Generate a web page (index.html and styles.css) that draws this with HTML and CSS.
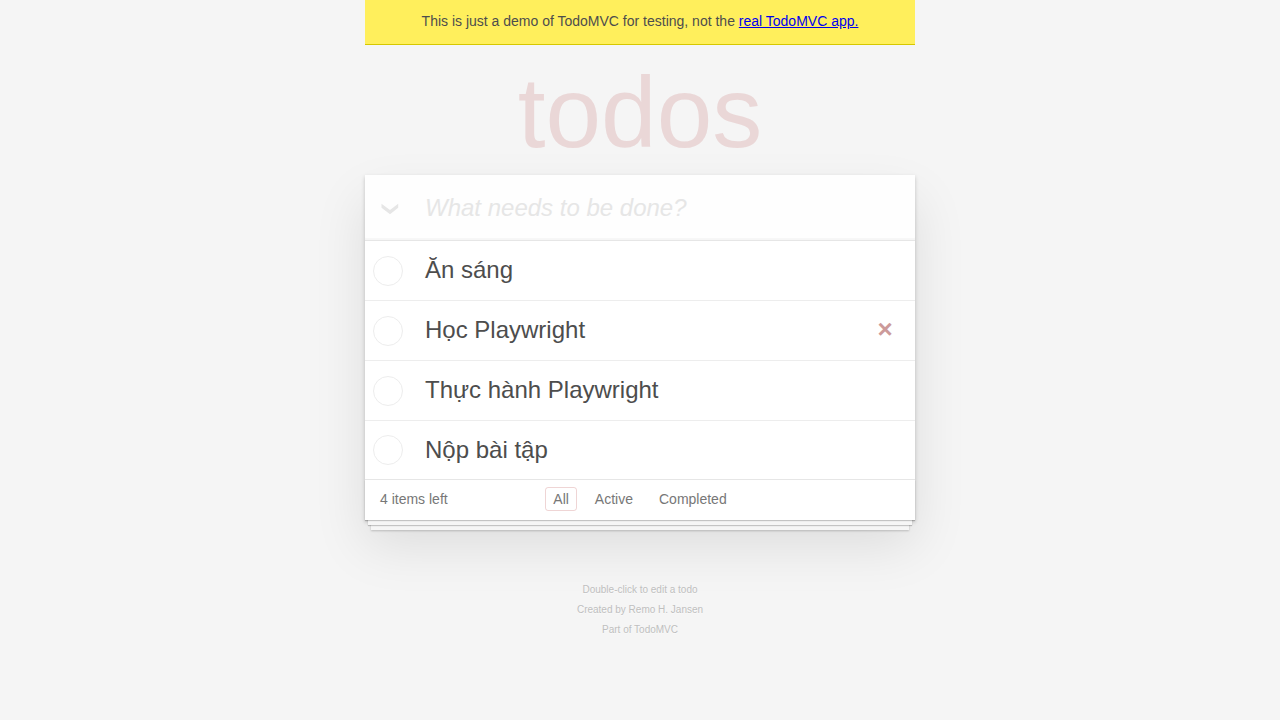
FILE: index.html
```html
<!DOCTYPE html>
<html lang="en">
<head>
<meta charset="utf-8">
<meta name="viewport" content="width=device-width, initial-scale=1">
<title>TodoMVC</title>
<link rel="stylesheet" href="styles.css">
</head>
<body class="page">
<div class="column">
<p class="banner">This is just a demo of TodoMVC for testing, not the <a href="#app">real TodoMVC app.</a></p>
<h1 class="title">todos</h1>
<main class="todoapp">
  <header class="new-row">
    <label class="toggle-all">
      <input class="toggle-all-input" type="checkbox" aria-label="Mark all as complete">
      <svg class="chevron" viewBox="0 0 18 12" width="18" height="12" aria-hidden="true"><path d="M.5 .8v4L9 11.200l8.200-6.400v-4L9 6.900z" fill="#e6e6e6"/></svg>
    </label>
    <input class="new-todo" type="text" placeholder="What needs to be done?" aria-label="What needs to be done?">
  </header>
  <ul class="todo-list">
    <li class="todo"><input class="toggle" type="checkbox" id="t1"><label class="todo-label" for="t1">Ăn sáng</label></li>
    <li class="todo"><input class="toggle" type="checkbox" id="t2"><label class="todo-label" for="t2">Học Playwright</label><button class="destroy" type="button" aria-label="Delete">×</button></li>
    <li class="todo"><input class="toggle" type="checkbox" id="t3"><label class="todo-label" for="t3">Thực hành Playwright</label></li>
    <li class="todo"><input class="toggle" type="checkbox" id="t4"><label class="todo-label" for="t4">Nộp bài tập</label></li>
  </ul>
  <footer class="footer">
    <span class="count">4 items left</span>
    <nav class="filters">
      <a class="filter selected" href="#all">All</a>
      <a class="filter" href="#active">Active</a>
      <a class="filter" href="#completed">Completed</a>
    </nav>
  </footer>
</main>
<footer class="info">
  <p class="info-line">Double-click to edit a todo</p>
  <p class="info-line">Created by <a class="info-link" href="#author">Remo H. Jansen</a></p>
  <p class="info-line">Part of <a class="info-link" href="#todomvc">TodoMVC</a></p>
</footer>
</div>
</body>
</html>
```

FILE: styles.css
```css
* { box-sizing: border-box; }

.page {
  margin: 0;
  background: #f5f5f5;
  color: #4d4d4d;
  font: 14px/20px "Liberation Sans", Arial, sans-serif;
}

.column {
  max-width: 550px;
  margin: 0 auto;
}

.banner {
  margin: 0;
  padding: 11px 10px 13px;
  background: #ffef5c;
  border-bottom: 1px solid #d6c800;
  text-align: center;
}

.title {
  margin: 0;
  padding-top: 5px;
  color: rgba(175, 47, 47, 0.15);
  font-size: 100px;
  font-weight: 100;
  line-height: 125px;
  text-align: center;
}

.todoapp {
  background: #fff;
  box-shadow: 0 2px 4px rgba(0, 0, 0, 0.2), 0 25px 50px rgba(0, 0, 0, 0.1);
}

.new-row {
  display: flex;
  height: 65px;
  background: rgba(0, 0, 0, 0.003);
  box-shadow: inset 0 -2px 1px rgba(0, 0, 0, 0.03);
}

.toggle-all {
  display: grid;
  place-items: center;
  width: 60px;
  padding: 3px 10px 0 0;
}

.toggle-all-input,
.chevron { grid-area: 1 / 1; }

.toggle-all-input {
  appearance: none;
  width: 1px;
  height: 1px;
  margin: 0;
}

.new-todo {
  flex: 1;
  min-width: 0;
  padding: 0 16px 0 0;
  border: 0;
  outline: 0;
  background: transparent;
  color: inherit;
  font: 24px "Liberation Sans", Arial, sans-serif;
}

.new-todo::placeholder {
  color: #e6e6e6;
  font-style: italic;
}

.todo-list {
  margin: 0;
  padding: 0;
  border-top: 1px solid #e6e6e6;
  list-style: none;
}

.todo {
  display: flex;
  align-items: center;
  padding: 0 10px 0 8px;
  border-bottom: 1px solid #ededed;
}

.todo:last-child { border-bottom: 0; }

.toggle {
  appearance: none;
  flex: none;
  width: 30px;
  height: 30px;
  margin: 0 22px 0 0;
  border: 1px solid #ededed;
  border-radius: 50%;
}

.todo-label {
  flex: 1;
  padding: 14px 0 16px;
  font-size: 24px;
  line-height: 29px;
}

.todo:last-child .todo-label { padding-bottom: 15px; }

.destroy {
  width: 40px;
  height: 40px;
  padding: 0 0 3px;
  border: 0;
  background: none;
  color: #cc9a9a;
  font: bold 26px "Liberation Sans", Arial, sans-serif;
}

.footer {
  position: relative;
  display: grid;
  grid-template-columns: 1fr auto 1fr;
  align-items: center;
  height: 41px;
  padding: 0 15px 2px;
  border-top: 1px solid #e6e6e6;
  color: #777;
}

/* stacked paper sheets under the card */
.footer::before {
  content: "";
  position: absolute;
  inset: 0;
  box-shadow: 0 1px 1px rgba(0, 0, 0, 0.2), 0 8px 0 -3px #f6f6f6,
    0 9px 1px -3px rgba(0, 0, 0, 0.2), 0 16px 0 -6px #f6f6f6,
    0 17px 2px -6px rgba(0, 0, 0, 0.2);
  pointer-events: none;
}

.filters {
  display: flex;
  gap: 10px;
}

.filter {
  padding: 3px 7px;
  border: 1px solid transparent;
  border-radius: 3px;
  color: inherit;
  line-height: 16px;
  text-decoration: none;
}

.selected { border-color: rgba(175, 47, 47, 0.2); }

.info {
  display: grid;
  gap: 10px;
  margin-top: 65px;
  color: #bfbfbf;
  font-size: 10px;
  line-height: 10px;
  text-align: center;
  text-shadow: 0 1px 0 rgba(255, 255, 255, 0.5);
}

.info-line { margin: 0; }

.info-link {
  color: inherit;
  text-decoration: none;
}
```
